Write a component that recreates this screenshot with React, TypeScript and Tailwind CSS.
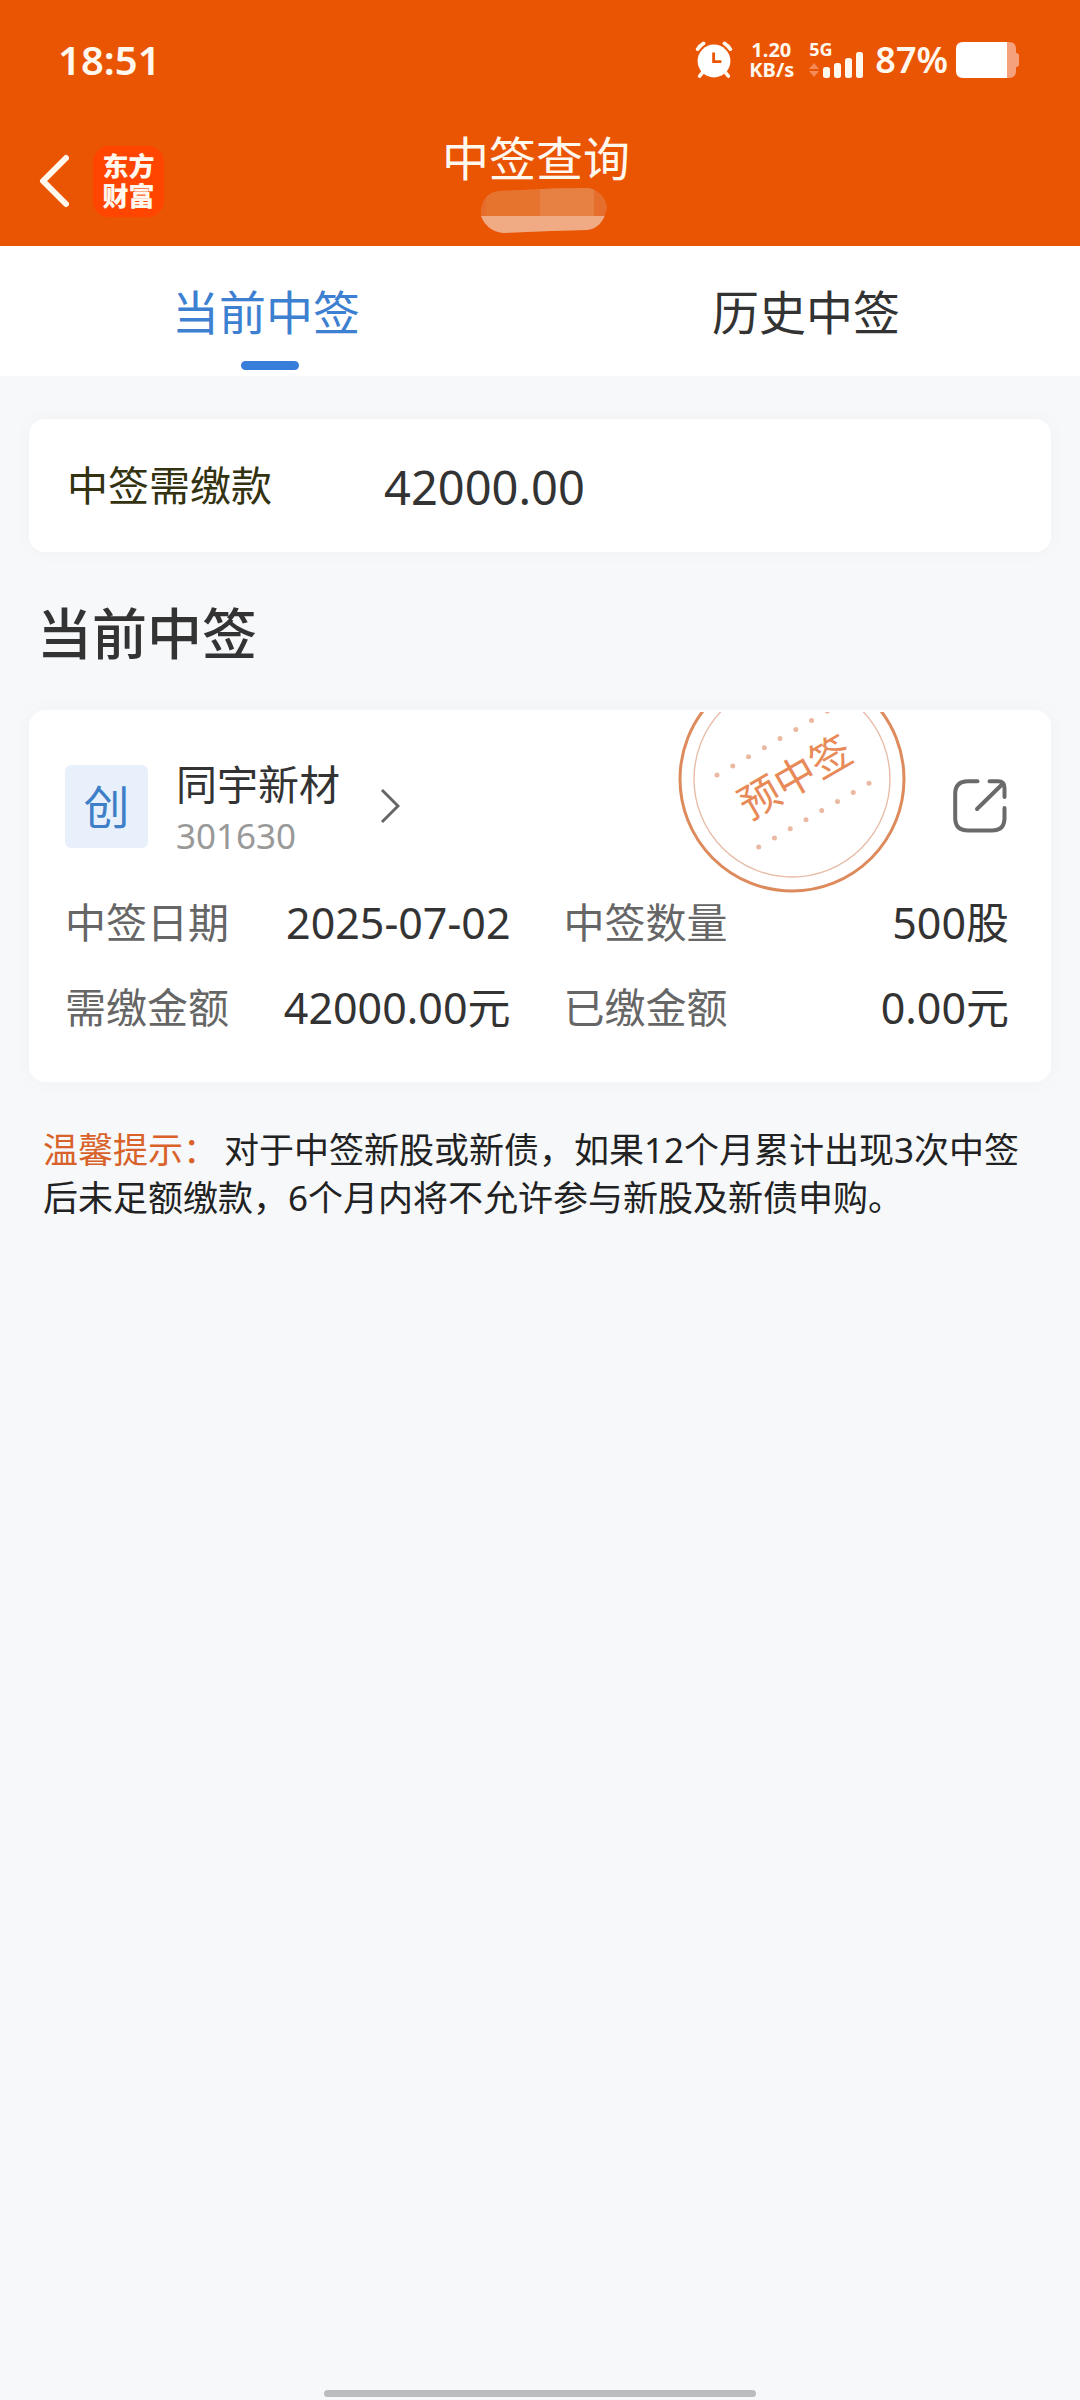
import type { ReactNode } from "react";

function AlarmIcon() {
  return (
    <svg width="38" height="38" viewBox="0 0 38 38" fill="none" aria-hidden="true">
      <g stroke="#fff8ee" strokeWidth="3.6" strokeLinecap="round">
        <path d="M2.6 8.2Q5 4.6 8.6 2.4M29.4 2.4Q33 4.6 35.4 8.2" />
        <path d="M8.4 30.5L4.6 35.2M29.6 30.5L33.4 35.2" />
      </g>
      <circle cx="19" cy="20" r="16.4" fill="#fff" />
      <path d="M18.6 11.6V20.6H26.4" stroke="#ea5504" strokeWidth="2.8" />
    </svg>
  );
}

function SignalIcon() {
  return (
    <svg width="54" height="26" viewBox="0 0 54 26" aria-hidden="true">
      <path d="M0 17L5 11L10 17ZM0 19L5 25L10 19Z" fill="#f58a58" />
      <g fill="#fff8ee">
        <rect x="14" y="15" width="7" height="11" rx="2.5" />
        <rect x="25" y="11" width="7" height="15" rx="2.5" />
        <rect x="36" y="6" width="7" height="20" rx="2.5" />
        <rect x="47" y="0" width="7" height="26" rx="2.5" />
      </g>
    </svg>
  );
}

function BatteryIcon() {
  return (
    <svg width="64" height="36" viewBox="0 0 64 36" aria-hidden="true">
      <path d="M51 0H53Q60 0 60 7V11Q63 11 63 14V22Q63 25 60 25V29Q60 36 53 36H51Z" fill="#f5a27c" />
      <path d="M51 0H7Q0 0 0 7V29Q0 36 7 36H51Z" fill="#fff" />
    </svg>
  );
}

function MaskedAccount() {
  return (
    <svg width="126" height="46" viewBox="0 0 126 46" role="img" aria-label="账户">
      <defs>
        <clipPath id="account">
          <path d="M0 22Q2 4 20 3L72 0.500L108 0Q124 4 126 20Q122 40 106 42L70 43L22 45Q6 43 0 28Z" />
        </clipPath>
      </defs>
      <g clipPath="url(#account)">
        <rect width="126" height="46" fill="#e66e2c" />
        <rect x="5" width="54" height="28" fill="#e6742f" />
        <rect x="59" width="54" height="28" fill="#e78043" />
        <rect y="28" width="126" height="18" fill="#f1ab84" />
      </g>
    </svg>
  );
}

const DOTS = [0, 1, 2, 3, 4, 5, 6, 7];

function Stamp() {
  return (
    <svg width="230" height="184" viewBox="677 712 230 184" role="img" aria-label="预中签">
      <circle cx="792" cy="779" r="112" fill="none" stroke="#dd8a5c" strokeWidth="3" />
      <circle cx="792" cy="779" r="98" fill="none" stroke="#e8bda8" strokeWidth="1.4" />
      <g fill="#ebb9a2">
        {DOTS.map((i) => (
          <circle key={i} cx={717 + i * 15.76} cy={775 - i * 9.1} r="2.5" />
        ))}
        {DOTS.map((i) => (
          <circle key={i} cx={758.7 + i * 15.76} cy={847 - i * 9.1} r="2.5" />
        ))}
      </g>
      <text
        x="795"
        y="792"
        textAnchor="middle"
        transform="rotate(-30 795 777)"
        className="fill-[#e88a58] text-[41px]"
      >
        预中签
      </text>
    </svg>
  );
}

function ShareIcon() {
  return (
    <svg
      width="54"
      height="54"
      viewBox="0 0 54 54"
      fill="none"
      stroke="#6a6a6a"
      strokeWidth="4"
      strokeLinecap="round"
      strokeLinejoin="round"
      aria-hidden="true"
    >
      <path d="M24.500 2.200H15Q2.200 2.200 2.200 15V39Q2.200 51.500 15 51.500H39Q51.500 51.500 51.500 39V29" />
      <path d="M36.500 2.200H45Q51.500 2.200 51.500 9V18" />
      <path d="M24 30L49.500 5" />
    </svg>
  );
}

function Card({ children, className }: { children: ReactNode; className: string }) {
  return (
    <section className={`rounded-2xl bg-white shadow-[0_0_20px_rgba(0,0,0,0.03)] ${className}`}>
      {children}
    </section>
  );
}

function Detail({ label, value }: { label: string; value: string }) {
  return (
    <div className="flex items-center justify-between">
      <dt className="text-[41px] text-[#666]">{label}</dt>
      <dd className="text-[43px] text-[#333]">{value}</dd>
    </div>
  );
}

export default function App() {
  return (
    <div className="flex min-h-screen flex-col bg-[#f6f8fa] font-['Noto_Sans','Noto_Sans_CJK_SC',sans-serif] text-[#333]">
      <header className="bg-[#ea5504] text-[#fff8ee]">
        <div className="flex h-[120px] items-center justify-between pr-[60px] pl-[58px]">
          <time className="text-[40px] font-semibold">18:51</time>
          <div className="flex items-center">
            <AlarmIcon />
            <div className="ml-4 flex w-11 flex-col text-center text-[20px] leading-[20px] font-bold">
              <span>1.20</span>
              <span>KB/s</span>
            </div>
            <div className="ml-4 flex h-9 flex-col justify-end">
              <span className="h-2.5 text-[18px] leading-[14px] font-bold">5G</span>
              <SignalIcon />
            </div>
            <span className="mr-2 ml-3 text-[36px] font-semibold">87%</span>
            <BatteryIcon />
          </div>
        </div>
        <div className="grid h-[126px] grid-cols-[1fr_auto_1fr]">
          <div className="flex items-center gap-6 pb-5 pl-[39px]">
            <button type="button" aria-label="返回" className="mt-4">
              <svg width="30" height="54" viewBox="0 0 30 54" fill="none" stroke="#fff8ee" strokeWidth="6" strokeLinecap="round" strokeLinejoin="round">
                <path d="M27 4L4 27L27 50" />
              </svg>
            </button>
            <div className="mt-4 flex size-[71px] flex-col items-center justify-center rounded-2xl bg-[#ff4500] text-[26px] leading-[30px] font-black">
              <span>东方</span>
              <span>财富</span>
            </div>
          </div>
          <div className="flex flex-col items-center pt-3.5 pr-2">
            <h1 className="text-[47px] leading-[48px]">中签查询</h1>
            <div className="pt-1.5 pl-4">
              <MaskedAccount />
            </div>
          </div>
        </div>
      </header>

      <nav role="tablist" className="grid h-[130px] grid-cols-2 bg-white text-[47px]">
        <button type="button" role="tab" aria-selected="true" className="relative pt-0.5 pr-2 text-[#3d7fd0]">
          当前中签
          <span className="absolute bottom-1.5 left-1/2 h-[9px] w-[58px] -translate-x-1/2 rounded-full bg-[#377dda]" />
        </button>
        <button type="button" role="tab" aria-selected="false" className="pt-0.5 pr-2">
          历史中签
        </button>
      </nav>

      <main className="flex-1 px-[29px] pt-[43px]">
        <Card className="flex h-[133px] items-center pl-[38px]">
          <span className="w-[317px] text-[41px] text-[#333311]">中签需缴款</span>
          <span className="pt-1 text-[47px]">42000.00</span>
        </Card>

        <h2 className="px-2 pt-[53px] pb-[49px] text-[55px] leading-[56px] font-medium">当前中签</h2>

        <Card className="relative px-9 pt-10 pb-8">
          <div className="flex items-center">
            <span className="flex size-[83px] items-center justify-center rounded-md bg-[#e8f1fb] text-[46px] text-[#3f7fc8]">
              创
            </span>
            <div className="ml-7 pt-2 leading-[52px]">
              <h3 className="text-[41px]">同宇新材</h3>
              <p className="text-[35px] text-[#999]">301630</p>
            </div>
            <button type="button" aria-label="查看详情" className="ml-10">
              <svg width="20" height="36" viewBox="0 0 20 36" fill="none" stroke="#666" strokeWidth="3">
                <path d="M2 2L18 18L2 34" />
              </svg>
            </button>
            <button type="button" aria-label="分享" className="mr-2 ml-auto">
              <ShareIcon />
            </button>
          </div>
          <div className="absolute top-0.5 right-[144px]">
            <Stamp />
          </div>
          <dl className="mt-[18px] mr-1.5 grid grid-cols-2 gap-x-[53px] leading-[85px]">
            <Detail label="中签日期" value="2025-07-02" />
            <Detail label="中签数量" value="500股" />
            <Detail label="需缴金额" value="42000.00元" />
            <Detail label="已缴金额" value="0.00元" />
          </dl>
        </Card>

        <p className="mt-11 px-3.5 text-[35px] leading-[48px] text-[#222]">
          <strong className="mr-1.5 font-normal text-[#d8622a]">温馨提示：</strong>
          对于中签新股或新债，如果12个月累计出现3次中签后未足额缴款，6个月内将不允许参与新股及新债申购。
        </p>
      </main>

      <div className="mx-auto mb-[3px] h-[7px] w-2/5 rounded-full bg-[#bbbcbe]" />
    </div>
  );
}
